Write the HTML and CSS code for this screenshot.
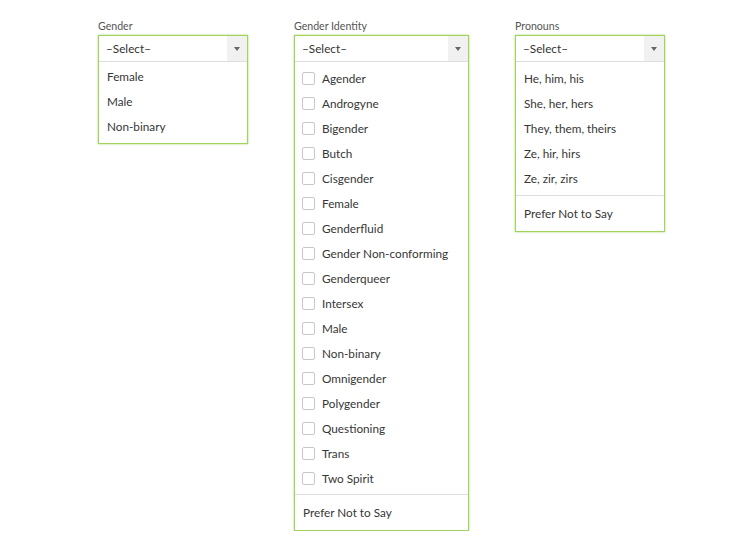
FILE: index.html
```html
<!DOCTYPE html>
<html lang="en">
<head>
  <meta charset="UTF-8">
  <title>Gender Fields</title>
  <link rel="stylesheet" href="styles.css">
</head>
<body>

  <div class="fields">

    <!-- Gender -->
    <div class="field narrow">
      <label>Gender</label>
      <div class="dropdown">
        <div class="select-head">
          <span class="select-text">–Select–</span>
          <span class="arrow"></span>
        </div>
        <ul class="options tight">
          <li>Female</li>
          <li>Male</li>
          <li>Non-binary</li>
        </ul>
      </div>
    </div>

    <!-- Gender Identity -->
    <div class="field wide">
      <label>Gender Identity</label>
      <div class="dropdown">
        <div class="select-head">
          <span class="select-text">–Select–</span>
          <span class="arrow"></span>
        </div>
        <ul class="options checks">
          <li><span class="box"></span>Agender</li>
          <li><span class="box"></span>Androgyne</li>
          <li><span class="box"></span>Bigender</li>
          <li><span class="box"></span>Butch</li>
          <li><span class="box"></span>Cisgender</li>
          <li><span class="box"></span>Female</li>
          <li><span class="box"></span>Genderfluid</li>
          <li><span class="box"></span>Gender Non-conforming</li>
          <li><span class="box"></span>Genderqueer</li>
          <li><span class="box"></span>Intersex</li>
          <li><span class="box"></span>Male</li>
          <li><span class="box"></span>Non-binary</li>
          <li><span class="box"></span>Omnigender</li>
          <li><span class="box"></span>Polygender</li>
          <li><span class="box"></span>Questioning</li>
          <li><span class="box"></span>Trans</li>
          <li><span class="box"></span>Two Spirit</li>
        </ul>
        <ul class="options extra">
          <li>Prefer Not to Say</li>
        </ul>
      </div>
    </div>

    <!-- Pronouns -->
    <div class="field narrow">
      <label>Pronouns</label>
      <div class="dropdown">
        <div class="select-head">
          <span class="select-text">–Select–</span>
          <span class="arrow"></span>
        </div>
        <ul class="options">
          <li>He, him, his</li>
          <li>She, her, hers</li>
          <li>They, them, theirs</li>
          <li>Ze, hir, hirs</li>
          <li>Ze, zir, zirs</li>
        </ul>
        <ul class="options extra">
          <li>Prefer Not to Say</li>
        </ul>
      </div>
    </div>

  </div>

</body>
</html>
```

FILE: styles.css
```css
body {
  font-family: Lato, "Open Sans", sans-serif;
  background-color: #ffffff;
  color: #363636;
  margin: 0;
  padding: 0;
}

.fields {
  display: flex;
  align-items: flex-start;
  gap: 46px;
  padding: 19px 0 0 98px;
}

.field {
  display: flex;
  flex-direction: column;
}

.narrow {
  width: 150px;
}

.wide {
  width: 175px;
}

label {
  font-size: 10.6px;
  line-height: 14px;
  color: #555;
  margin-bottom: 2px;
}

.dropdown {
  border: 1px solid #a3d35c;
  box-shadow: 0 0 2px rgba(150, 205, 80, 0.8);
  background-color: #fff;
}

.select-head {
  display: flex;
  height: 25px;
  border-bottom: 1px solid #dedede;
}

.select-text {
  flex: 1;
  font-size: 11.75px;
  line-height: 25px;
  padding-left: 7px;
  color: #333;
}

.arrow {
  width: 20px;
  background-color: #f1f1f1;
  position: relative;
}

.arrow::after {
  content: "";
  position: absolute;
  left: 7px;
  top: 11px;
  border-left: 3.5px solid transparent;
  border-right: 3.5px solid transparent;
  border-top: 4px solid #666;
}

.options {
  list-style: none;
  margin: 0;
  padding: 4px 0 4px;
}

.options.tight {
  padding: 2px 0 4px;
}

.options.checks {
  padding: 4px 0 3px;
}

.options li {
  font-size: 11.75px;
  line-height: 25px;
  height: 25px;
  padding-left: 8px;
  display: flex;
  align-items: center;
  white-space: nowrap;
}

.checks li {
  padding-left: 7px;
}

.extra {
  border-top: 1px solid #dedede;
}

.options.extra {
  padding: 5px 0 5px;
}

.box {
  width: 11px;
  height: 11px;
  border: 1px solid #c8c8c8;
  border-radius: 2px;
  margin-right: 7px;
  flex-shrink: 0;
}
```
